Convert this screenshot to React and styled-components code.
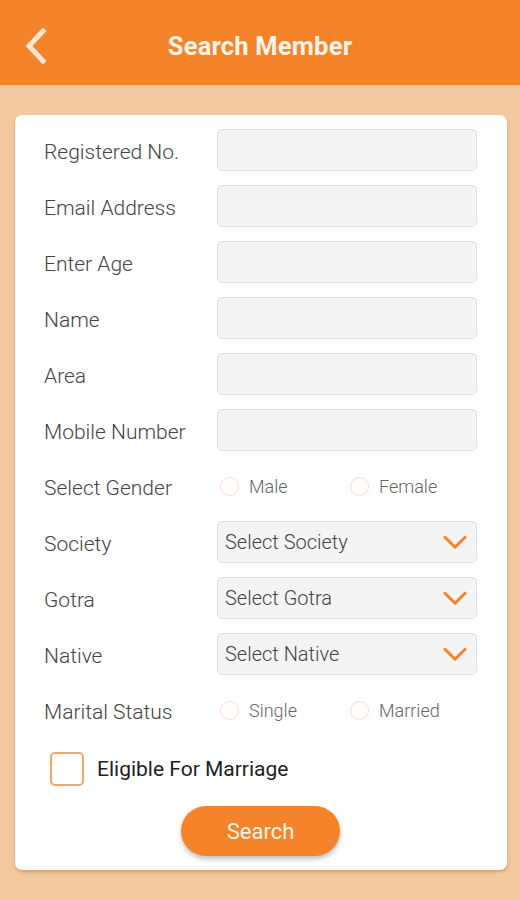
import React from "react";
import styled, { createGlobalStyle } from "styled-components";

const Global = createGlobalStyle`
  html, body {
    margin: 0;
    padding: 0;
    background: #f2c89e;
    font-family: Roboto, "Liberation Sans", sans-serif;
  }
`;

function Chevron({ size = 24, color = "#f5832a", width = 3 }) {
  return (
    <svg width={size} height={size * 0.6} viewBox="0 0 24 14" fill="none">
      <path d="M2 2 L12 12 L22 2" stroke={color} strokeWidth={width} strokeLinecap="round" strokeLinejoin="round" />
    </svg>
  );
}

function BackArrow() {
  return (
    <svg width="24" height="36" viewBox="0 0 24 36" fill="none">
      <path d="M19 3 L5 18 L19 33" stroke="#fde6d2" strokeWidth="5" strokeLinecap="square" />
    </svg>
  );
}

const fields = [
  { label: "Registered No.", type: "input" },
  { label: "Email Address", type: "input" },
  { label: "Enter Age", type: "input" },
  { label: "Name", type: "input" },
  { label: "Area", type: "input" },
  { label: "Mobile Number", type: "input" },
  { label: "Select Gender", type: "radio", options: ["Male", "Female"] },
  { label: "Society", type: "select", placeholder: "Select Society" },
  { label: "Gotra", type: "select", placeholder: "Select Gotra" },
  { label: "Native", type: "select", placeholder: "Select Native" },
  { label: "Marital Status", type: "radio", options: ["Single", "Married"] },
];

function App() {
  return (
    <>
      <Global />
      <Page>
        <Header>
          <BackButton>
            <BackArrow />
          </BackButton>
          <Title>Search Member</Title>
        </Header>
        <Card>
          {fields.map((f) => (
            <Row key={f.label}>
              <Label>{f.label}</Label>
              {f.type === "input" && <Input />}
              {f.type === "select" && (
                <Select>
                  <span>{f.placeholder}</span>
                  <Chevron />
                </Select>
              )}
              {f.type === "radio" && (
                <RadioGroup>
                  {f.options.map((o) => (
                    <RadioOption key={o}>
                      <RadioDot />
                      {o}
                    </RadioOption>
                  ))}
                </RadioGroup>
              )}
            </Row>
          ))}
          <CheckRow>
            <CheckBox />
            <CheckLabel>Eligible For Marriage</CheckLabel>
          </CheckRow>
          <ButtonRow>
            <SearchButton type="button">Search</SearchButton>
          </ButtonRow>
        </Card>
      </Page>
    </>
  );
}

export default App;

const Page = styled.div`
  width: 520px;
  height: 900px;
  background: #f2c89e;
  overflow: hidden;
`;

const Header = styled.div`
  height: 85px;
  background: #f5832a;
  display: flex;
  align-items: center;
  justify-content: center;
  position: relative;
`;

const BackButton = styled.div`
  position: absolute;
  left: 24px;
  top: 28px;
  display: flex;
`;

const Title = styled.h1`
  margin: 0;
  margin-top: 6px;
  color: #fff4ea;
  font-size: 25.5px;
  font-weight: 700;
  letter-spacing: 0.2px;
`;

const Card = styled.div`
  margin: 30px 13px 0 15px;
  background: #fff;
  border-radius: 7px;
  box-shadow: 0 2px 3px rgba(150, 90, 30, 0.35);
  padding: 14px 30px 14px 29px;
  display: flex;
  flex-direction: column;
  gap: 14px;
`;

const Row = styled.div`
  display: grid;
  grid-template-columns: 173px 1fr;
  align-items: center;
  height: 42px;
`;

const Label = styled.div`
  font-size: 21px;
  font-weight: 300;
  color: #444;
  white-space: nowrap;
  padding-top: 3px;
`;

const Input = styled.div`
  height: 40px;
  background: #f4f4f4;
  border: 1px solid #dedede;
  border-radius: 5px;
`;

const Select = styled(Input)`
  display: flex;
  align-items: center;
  justify-content: space-between;
  padding: 0 9px 0 7px;
  font-size: 20px;
  font-weight: 300;
  color: #444;
`;

const RadioGroup = styled.div`
  display: grid;
  grid-template-columns: 130px 1fr;
  padding-left: 3px;
`;

const RadioOption = styled.div`
  display: flex;
  align-items: center;
  gap: 10px;
  font-size: 18px;
  font-weight: 300;
  color: #666;
`;

const RadioDot = styled.span`
  width: 19px;
  height: 19px;
  border-radius: 50%;
  border: 1px solid #fbd9c2;
  box-sizing: border-box;
`;

const CheckRow = styled.div`
  display: flex;
  align-items: center;
  gap: 13px;
  padding-left: 6px;
  height: 34px;
  margin-top: 7px;
`;

const CheckBox = styled.span`
  width: 34px;
  height: 34px;
  border: 2px solid #f5a66b;
  border-radius: 5px;
  box-sizing: border-box;
`;

const CheckLabel = styled.span`
  font-size: 21px;
  color: #222;
`;

const ButtonRow = styled.div`
  display: flex;
  justify-content: center;
  margin-top: 6px;
`;

const SearchButton = styled.button`
  width: 159px;
  height: 50px;
  border: none;
  border-radius: 25px;
  background: #f5832a;
  color: #fff4ea;
  font-family: Roboto, "Liberation Sans", sans-serif;
  font-size: 22px;
  box-shadow: 0 3px 5px rgba(0, 0, 0, 0.25);
`;
